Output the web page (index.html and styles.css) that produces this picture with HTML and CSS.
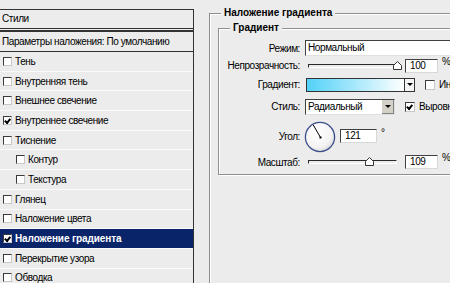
FILE: index.html
```html
<!DOCTYPE html>
<html lang="ru">
<head>
    <meta charset="UTF-8">
    <title>Стиль слоя</title>
    <link rel="stylesheet" href="styles.css">
</head>
<body>
    <div class="window">
        <aside class="styles_panel">
            <div class="panel_title">Стили</div>
            <div class="panel_default">Параметры наложения: По умолчанию</div>
            <ul class="effects">
                <li class="effect"><span class="check"></span>Тень</li>
                <li class="effect"><span class="check"></span>Внутренняя тень</li>
                <li class="effect"><span class="check"></span>Внешнее свечение</li>
                <li class="effect"><span class="check checked"></span>Внутреннее свечение</li>
                <li class="effect"><span class="check"></span>Тиснение</li>
                <li class="effect sub"><span class="check"></span>Контур</li>
                <li class="effect sub"><span class="check"></span>Текстура</li>
                <li class="effect"><span class="check"></span>Глянец</li>
                <li class="effect"><span class="check"></span>Наложение цвета</li>
                <li class="effect selected"><span class="check checked"></span>Наложение градиента</li>
                <li class="effect"><span class="check"></span>Перекрытие узора</li>
                <li class="effect"><span class="check"></span>Обводка</li>
            </ul>
        </aside>

        <main class="settings">
            <fieldset class="group">
                <legend>Наложение градиента</legend>
                <fieldset class="group inner">
                    <legend>Градиент</legend>

                    <div class="field field_mode">
                        <label>Режим:</label>
                        <div class="control">
                            <div class="select wide">Нормальный</div>
                        </div>
                    </div>

                    <div class="field field_opacity">
                        <label>Непрозрачность:</label>
                        <div class="control">
                            <div class="slider">
                                <div class="track"></div>
                                <svg class="thumb" style="left: 88px" width="9" height="9" viewBox="0 0 9 9">
                                    <path d="M0.5 8.5 V4.5 L4.5 0.5 L8.5 4.5 V8.5 Z" fill="#fff" stroke="#333"/>
                                </svg>
                            </div>
                            <div class="number">100</div>
                            <span class="unit">%</span>
                        </div>
                    </div>

                    <div class="field field_gradient">
                        <label>Градиент:</label>
                        <div class="control">
                            <div class="swatch"></div>
                            <div class="swatch_arrow"><span class="triangle"></span></div>
                            <span class="box"></span>
                            <span class="option">Инверсия</span>
                        </div>
                    </div>

                    <div class="field field_style">
                        <label>Стиль:</label>
                        <div class="control">
                            <div class="select short">Радиальный<span class="select_button"><span class="triangle"></span></span></div>
                            <span class="box checked"></span>
                            <span class="option">Выровнять</span>
                        </div>
                    </div>

                    <div class="field field_angle">
                        <label>Угол:</label>
                        <div class="control">
                            <svg class="dial" width="32" height="32" viewBox="0 0 32 32">
                                <defs>
                                    <radialGradient id="dialfill" cx="0.4" cy="0.35" r="0.7">
                                        <stop offset="0" stop-color="#ffffff"/>
                                        <stop offset="0.7" stop-color="#f4f4f4"/>
                                        <stop offset="1" stop-color="#d8d8d8"/>
                                    </radialGradient>
                                </defs>
                                <circle cx="16" cy="16" r="14.6" fill="url(#dialfill)" stroke="#3b4f8c" stroke-width="1.3"/>
                                <line x1="16.5" y1="16.5" x2="9.2" y2="3.8" stroke="#000" stroke-width="1"/>
                                <rect x="15.5" y="15.5" width="2" height="2" fill="#000"/>
                            </svg>
                            <div class="number angle">121</div>
                            <span class="degree">°</span>
                        </div>
                    </div>

                    <div class="field field_scale">
                        <label>Масштаб:</label>
                        <div class="control">
                            <div class="slider">
                                <div class="track"></div>
                                <svg class="thumb" style="left: 60px" width="9" height="9" viewBox="0 0 9 9">
                                    <path d="M0.5 8.5 V4.5 L4.5 0.5 L8.5 4.5 V8.5 Z" fill="#fff" stroke="#333"/>
                                </svg>
                            </div>
                            <div class="number">109</div>
                            <span class="unit">%</span>
                        </div>
                    </div>
                </fieldset>
            </fieldset>
        </main>
    </div>
</body>
</html>
```

FILE: styles.css
```css
body {
    margin: 0;
    background-color: #ececec;
    color: #000000;
    font-family: "Liberation Sans", Arial, sans-serif;
    font-size: 10px;
    letter-spacing: -0.4px;
    overflow: hidden;
}

.window {
    display: flex;
    width: 450px;
    height: 283px;
    overflow: hidden;
}

/* left list of effects */

.styles_panel {
    flex: none;
    width: 193px;
    margin-top: 9px;
    border-top: 1px solid #333333;
    border-right: 1px solid #333333;
}

.panel_title {
    height: 18px;
    line-height: 18px;
    padding-left: 2px;
    border-bottom: 1px solid #333333;
}

.panel_default {
    height: 19px;
    line-height: 19px;
    margin-top: 1px;
    padding-left: 2px;
    border-top: 2px solid #333333;
    border-bottom: 1px solid #333333;
}

.effects {
    list-style: none;
    margin: 0;
    padding: 0;
}

.effect {
    display: flex;
    align-items: center;
    height: 18.7px;
    padding-left: 3px;
    border-bottom: 1px solid #fafafa;
}

.effect.sub {
    padding-left: 16px;
}

.effect.selected {
    background-color: #0a246a;
    color: #ffffff;
    font-weight: bold;
    letter-spacing: -0.1px;
}

.check {
    position: relative;
    flex: none;
    box-sizing: border-box;
    width: 9px;
    height: 9px;
    margin-right: 3px;
    background-color: #ffffff;
    border-style: solid;
    border-width: 1px;
    border-color: #3a3a3a #c8c8c8 #c8c8c8 #3a3a3a;
}

.check.checked::after,
.box.checked::after {
    content: "";
    position: absolute;
    left: 1px;
    top: 0px;
    width: 2px;
    height: 4px;
    border-right: 2px solid #000000;
    border-bottom: 2px solid #000000;
    transform: rotate(40deg);
    transform-origin: 0 0;
    translate: 3px 0;
}

/* right settings */

.settings {
    flex: none;
    width: 300px;
    padding-left: 15px;
}

.group {
    margin: 7px 0 0 0;
    padding: 0 0 0 8px;
    border: 1px solid #8e8e8e;
    box-shadow: inset 1px 1px 0 #ffffff, 1px 1px 0 #ffffff;
    min-height: 300px;
}

.group legend {
    margin-left: 3px;
    padding: 0 3px;
    line-height: 12px;
    font-weight: bold;
    letter-spacing: 0;
    background-color: #ececec;
}

.group.inner {
    min-height: 0;
    margin-top: 3px;
    padding: 4px 0 4px 8px;
}

.field {
    display: grid;
    grid-template-columns: 73px 1fr;
    column-gap: 5px;
    align-items: center;
}

.field label {
    text-align: right;
    white-space: nowrap;
}

.field_mode { height: 20px; }
.field_opacity { height: 15px; }
.field_gradient { height: 21px; margin-top: 1px; }
.field_style { height: 23px; }
.field_angle { height: 36px; }
.field_scale { height: 16px; }

.control {
    display: flex;
    align-items: center;
}

.select {
    position: relative;
    box-sizing: border-box;
    height: 16px;
    line-height: 14px;
    padding-left: 2px;
    background-color: #ffffff;
    border-style: solid;
    border-width: 1px;
    border-color: #404040 #e0e0e0 #e0e0e0 #404040;
}

.select.wide {
    width: 160px;
}

.select.short {
    width: 90px;
}

.select_button {
    position: absolute;
    right: 0;
    top: 0;
    bottom: 0;
    width: 12px;
    display: flex;
    align-items: center;
    justify-content: center;
    background-color: #d4d0c8;
    border-left: 1px solid #ffffff;
    box-shadow: inset -1px -1px 0 #808080;
}

.triangle {
    width: 0;
    height: 0;
    border-left: 3px solid transparent;
    border-right: 3px solid transparent;
    border-top: 3px solid #000000;
}

.slider {
    position: relative;
    width: 92px;
    height: 10px;
}

.track {
    position: absolute;
    left: 3px;
    right: 0;
    top: 3px;
    height: 2px;
    border: 1px solid #2a2a2a;
    border-bottom-color: #ffffff;
    border-right-color: #ffffff;
    background-color: #ececec;
}

.thumb {
    position: absolute;
    top: 0;
}

.number {
    box-sizing: border-box;
    width: 33px;
    height: 14px;
    line-height: 12px;
    margin-left: 8px;
    padding-left: 4px;
    background-color: #ffffff;
    border-style: solid;
    border-width: 1px;
    border-color: #404040 #d8d8d8 #d8d8d8 #404040;
}

.unit {
    margin-left: 4px;
    align-self: flex-start;
    margin-top: -3px;
}

.swatch {
    box-sizing: border-box;
    width: 99px;
    height: 14px;
    margin-left: 1px;
    border: 1px solid #333333;
    background: linear-gradient(to right, #52d2f8, #ffffff);
}

.swatch_arrow {
    box-sizing: border-box;
    width: 10px;
    height: 14px;
    display: flex;
    align-items: center;
    justify-content: center;
    background-color: #f4f4f4;
    border: 1px solid #333333;
    border-left: 0;
}

.box {
    position: relative;
    box-sizing: border-box;
    width: 10px;
    height: 10px;
    margin-left: 10px;
    background-color: #ffffff;
    border-style: solid;
    border-width: 1px;
    border-color: #3a3a3a #c8c8c8 #c8c8c8 #3a3a3a;
}

.option {
    margin-left: 4px;
    white-space: nowrap;
}

.dial {
    margin-left: -1px;
    margin-top: 2px;
}

.number.angle {
    width: 37px;
    margin-left: 4px;
}

.degree {
    margin-left: 4px;
    align-self: flex-start;
    margin-top: 8px;
}
```
